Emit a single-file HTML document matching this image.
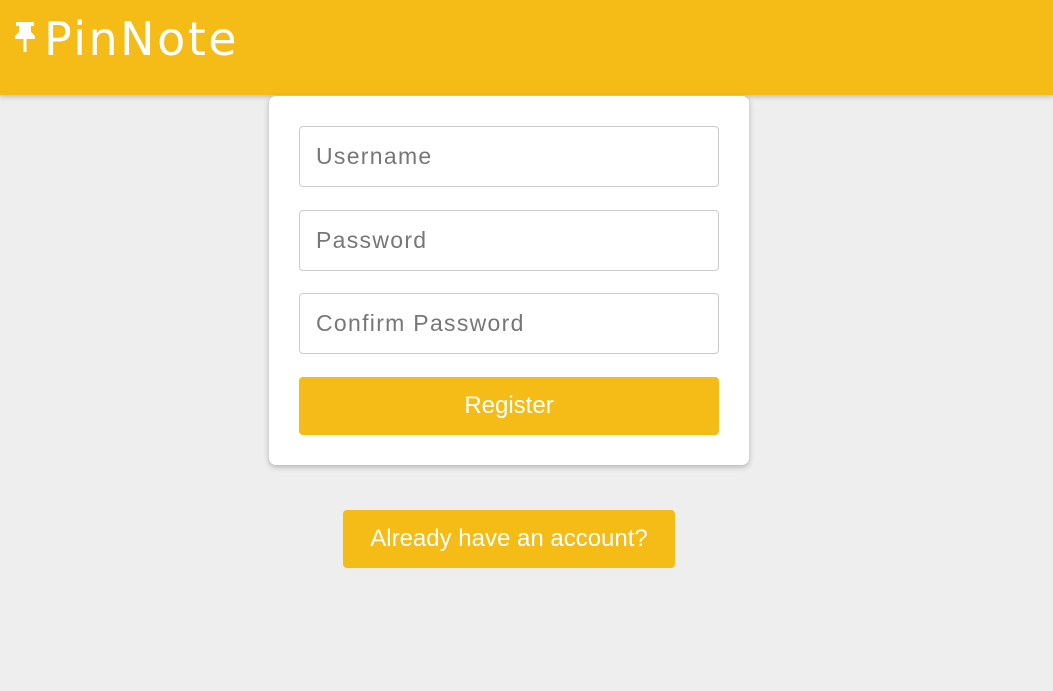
<!DOCTYPE html>
<html><head><style>
body{margin:0;background:#eeeeee;font-family:"Liberation Sans",sans-serif;width:1053px;height:691px;overflow:hidden;position:relative}
.hdr{position:absolute;left:0;top:0;width:1053px;height:95px;background:#f5bb17;box-shadow:0 2px 5px rgba(0,0,0,.2)}
.logo{position:absolute;left:44px;top:12px;font-size:46px;color:#fff;font-family:"DejaVu Sans",sans-serif;letter-spacing:2.5px}
.card{position:absolute;left:269px;top:96px;width:480px;height:369px;background:#fff;border-radius:7px;box-shadow:0 2px 6px rgba(0,0,0,.25)}
.in{position:absolute;left:30px;border:1px solid #ccc;border-radius:4px;font-size:23px;letter-spacing:1.3px;color:#777;line-height:59px;padding-left:16px;box-sizing:border-box;width:420px;height:61px}
.btn{position:absolute;background:#f5bb17;color:#fff;border-radius:4px;text-align:center;font-size:24px}
</style></head><body>
<div class="hdr">
<svg style="position:absolute;left:13px;top:22px" width="24" height="30" viewBox="0 0 24 30"><path d="M3 0h18v4h-3v6l4 4v3H2v-3l4-4V4H3z" fill="#fff"/><rect x="10.5" y="17" width="3" height="13" fill="#fff"/></svg>
<div class="logo">PinNote</div>
</div>
<div class="card">
<div class="in" style="top:30px">Username</div>
<div class="in" style="top:114px">Password</div>
<div class="in" style="top:197px">Confirm Password</div>
<div class="btn" style="left:30px;top:281px;width:420px;height:58px;line-height:58px">Register</div>
</div>
<div class="btn" style="left:343px;top:510px;width:332px;height:58px;line-height:58px">Already have an account?</div>
</body></html>
